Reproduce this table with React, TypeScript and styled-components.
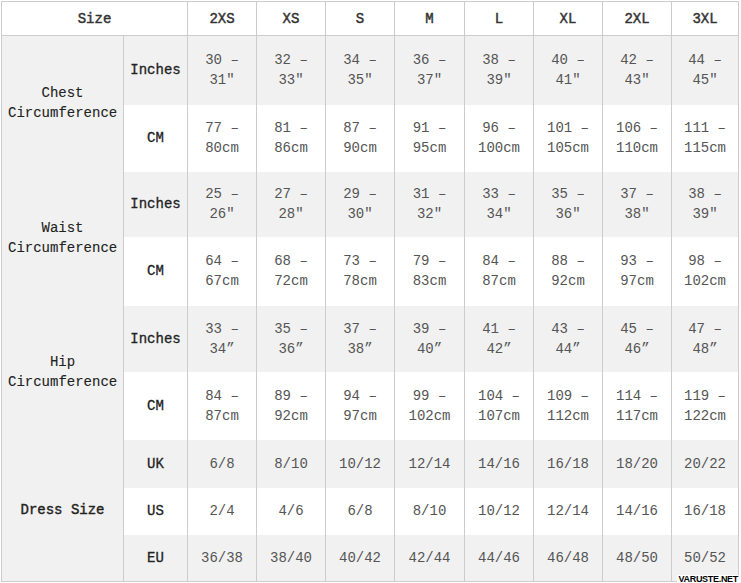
import React from "react";
import styled, { createGlobalStyle } from "styled-components";

const Global = createGlobalStyle`
  html, body { margin: 0; padding: 0; background: #fff; }
  body { padding: 1px 0 0 1px; }
`;

const Page = styled.div`
  position: relative;
  width: 738px;
  height: 582px;
`;

const Table = styled.table`
  border-collapse: collapse;
  table-layout: fixed;
  width: 737px;
  font-family: "Liberation Mono", "Courier New", monospace;
  font-size: 14px;
  line-height: 20px;
  color: #444;
  border: 1px solid #ccc;
`;

const HeadCell = styled.th`
  height: 33px;
  padding: 0;
  font-weight: normal;
  -webkit-text-stroke: 0.45px #333;
  color: #333;
  text-align: center;
  border: 1px solid #ccc;
  background: #fff;
`;

const Row = styled.tr<{ $shade: boolean; $h: number }>`
  height: ${(p) => p.$h}px;
  background: ${(p) => (p.$shade ? "#f1f1f1" : "#fff")};
`;

const GroupCell = styled.td<{ $bold?: boolean }>`
  background: #f1f1f1;
  color: #222;
  text-align: center;
  vertical-align: middle;
  padding: 0 6px 1px;
  border-left: 1px solid #ccc;
  border-right: 1px solid #ccc;
  -webkit-text-stroke: ${(p) => (p.$bold ? "0.4px #222" : "0.1px #222")};
`;

const UnitCell = styled.td`
  text-align: center;
  padding: 0;
  color: #222;
  -webkit-text-stroke: 0.3px #222;
  border-left: 1px solid #ccc;
  border-right: 1px solid #ccc;
`;

const ValueCell = styled.td`
  text-align: center;
  padding: 0 10px;
  color: #555;
  border-left: 1px solid #ccc;
  border-right: 1px solid #ccc;
`;

const Watermark = styled.div`
  position: absolute;
  right: 0px;
  bottom: 0px;
  font-family: "Liberation Sans", Arial, sans-serif;
  font-size: 9px;
  font-weight: bold;
  line-height: 8px;
  color: #000;
  background: #fff;
  padding: 0 1px;
  letter-spacing: -0.3px;
`;

const sizes = ["2XS", "XS", "S", "M", "L", "XL", "2XL", "3XL"];
const colWidths = [122, 64, 69, 69, 69, 70, 69, 69, 69, 67];

type R = { unit: string; values: string[]; h: number };
type G = { label: string; bold?: boolean; rows: R[] };

const groups: G[] = [
  {
    label: "Chest Circumference",
    rows: [
      { unit: "Inches", h: 69, values: ["30 – 31\"", "32 – 33\"", "34 – 35\"", "36 – 37\"", "38 – 39\"", "40 – 41\"", "42 – 43\"", "44 – 45\""] },
      { unit: "CM", h: 67, values: ["77 – 80cm", "81 – 86cm", "87 – 90cm", "91 – 95cm", "96 – 100cm", "101 – 105cm", "106 – 110cm", "111 – 115cm"] },
    ],
  },
  {
    label: "Waist Circumference",
    rows: [
      { unit: "Inches", h: 65, values: ["25 – 26\"", "27 – 28\"", "29 – 30\"", "31 – 32\"", "33 – 34\"", "35 – 36\"", "37 – 38\"", "38 – 39\""] },
      { unit: "CM", h: 69, values: ["64 – 67cm", "68 – 72cm", "73 – 78cm", "79 – 83cm", "84 – 87cm", "88 – 92cm", "93 – 97cm", "98 – 102cm"] },
    ],
  },
  {
    label: "Hip Circumference",
    rows: [
      { unit: "Inches", h: 66, values: ["33 – 34”", "35 – 36”", "37 – 38”", "39 – 40”", "41 – 42”", "43 – 44”", "45 – 46”", "47 – 48”"] },
      { unit: "CM", h: 68, values: ["84 – 87cm", "89 – 92cm", "94 – 97cm", "99 – 102cm", "104 – 107cm", "109 – 112cm", "114 – 117cm", "119 – 122cm"] },
    ],
  },
  {
    label: "Dress Size",
    bold: true,
    rows: [
      { unit: "UK", h: 48, values: ["6/8", "8/10", "10/12", "12/14", "14/16", "16/18", "18/20", "20/22"] },
      { unit: "US", h: 47, values: ["2/4", "4/6", "6/8", "8/10", "10/12", "12/14", "14/16", "16/18"] },
      { unit: "EU", h: 47, values: ["36/38", "38/40", "40/42", "42/44", "44/46", "46/48", "48/50", "50/52"] },
    ],
  },
];

export default function App() {
  let idx = 0;
  return (
    <Page>
      <Global />
      <Table>
        <colgroup>
          {colWidths.map((w, i) => (
            <col key={i} style={{ width: w }} />
          ))}
        </colgroup>
        <thead>
          <tr>
            <HeadCell colSpan={2}>Size</HeadCell>
            {sizes.map((s) => (
              <HeadCell key={s}>{s}</HeadCell>
            ))}
          </tr>
        </thead>
        <tbody>
          {groups.map((g) =>
            g.rows.map((r, ri) => {
              const shade = idx % 2 === 0;
              idx++;
              return (
                <Row key={g.label + r.unit} $shade={shade} $h={r.h}>
                  {ri === 0 && (
                    <GroupCell rowSpan={g.rows.length} $bold={g.bold}>
                      {g.label}
                    </GroupCell>
                  )}
                  <UnitCell>{r.unit}</UnitCell>
                  {r.values.map((v, vi) => (
                    <ValueCell key={vi}>{v}</ValueCell>
                  ))}
                </Row>
              );
            })
          )}
        </tbody>
      </Table>
      <Watermark>VARUSTE.NET</Watermark>
    </Page>
  );
}
